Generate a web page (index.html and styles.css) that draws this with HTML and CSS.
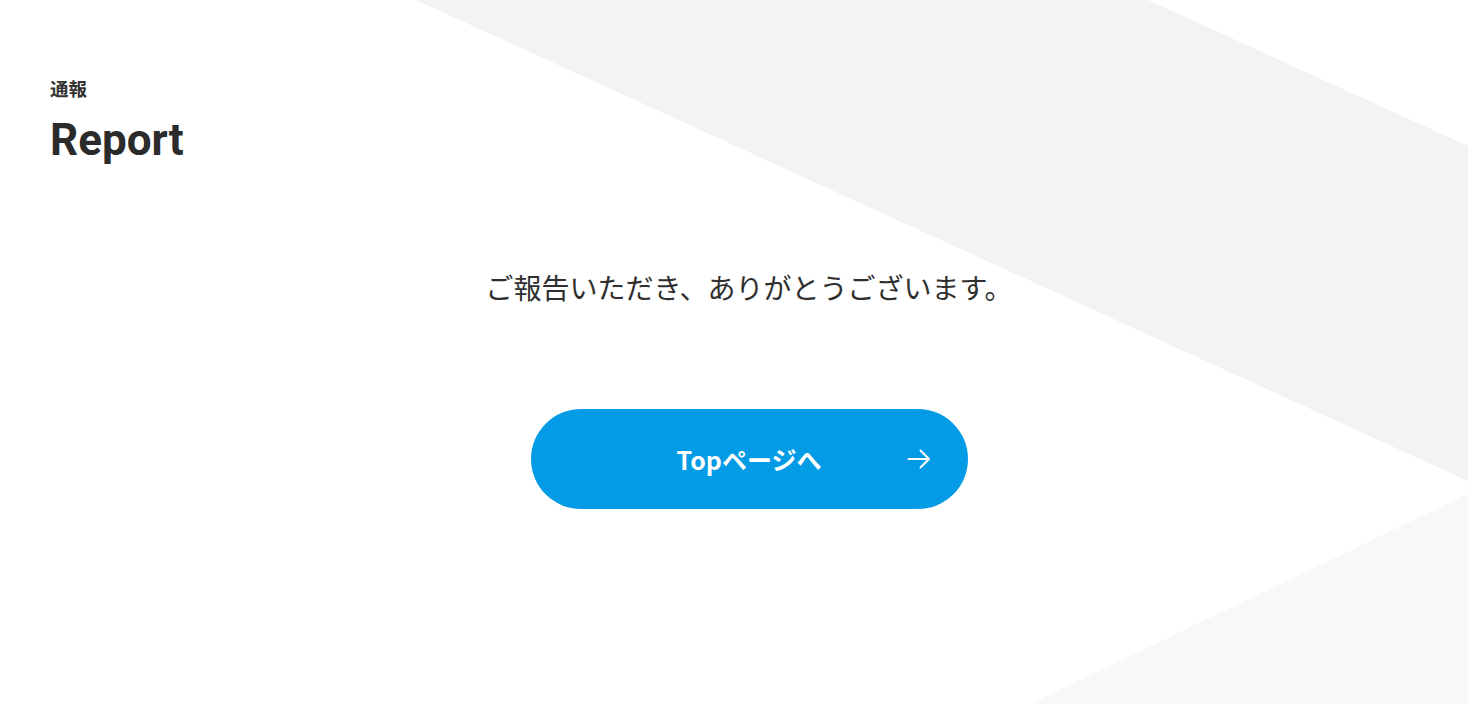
FILE: index.html
```html
<!DOCTYPE html>
<html lang="ja">
<head>
<meta charset="utf-8">
<title>Report</title>
<link rel="stylesheet" href="styles.css">
</head>
<body>
<svg class="bg" width="1468" height="704" viewBox="0 0 1468 704" aria-hidden="true">
  <polygon points="416,0 1148,0 1468,146 1468,481" fill="#f3f3f3"/>
  <polygon points="1030,704 1468,494 1468,704" fill="#f8f8f8"/>
</svg>
<div class="page">
  <header class="head">
    <p class="sub">通報</p>
    <h1 class="title">Report</h1>
  </header>
  <main class="content">
    <p class="msg">ご報告いただき、ありがとうございます。</p>
    <a class="btn" href="#">
      <span class="btn-label">Topページへ</span>
      <svg class="arrow" width="24" height="20" viewBox="0 0 24 20" aria-hidden="true">
        <path d="M1.5 10 H22 M13.5 1.5 L22 10 L13.5 18.5" fill="none" stroke="#fff" stroke-width="2" stroke-linecap="round" stroke-linejoin="round"/>
      </svg>
    </a>
  </main>
</div>
</body>
</html>
```
FILE: styles.css
```css
* { box-sizing: border-box; }
html, body { margin: 0; padding: 0; }
body {
  width: 1468px;
  height: 704px;
  overflow: hidden;
  background: #fff;
  color: #333;
  font-family: "Noto Sans CJK JP", "Noto Sans", sans-serif;
  position: relative;
}
.bg {
  position: absolute;
  left: 0;
  top: 0;
  z-index: 0;
}
.page {
  position: relative;
  z-index: 1;
  display: flex;
  flex-direction: column;
}
.head {
  padding: 76px 0 0 50px;
}
.sub {
  margin: 0;
  font-size: 18.5px;
  font-weight: 700;
  line-height: 24px;
  color: #333;
}
.title {
  margin: 15px 0 0;
  font-family: Roboto, "Noto Sans", sans-serif;
  font-size: 44px;
  font-weight: 700;
  line-height: 51px;
  color: #2b2b2b;
}
.content {
  display: flex;
  flex-direction: column;
  align-items: center;
  padding-left: 30px;
  padding-top: 101px;
}
.msg {
  margin: 0;
  font-size: 28px;
  line-height: 40px;
  font-weight: 400;
  color: #2f2f2f;
}
.btn {
  margin-top: 102px;
  width: 437px;
  height: 100px;
  border-radius: 50px;
  background: #039be5;
  color: #fff;
  text-decoration: none;
  display: flex;
  align-items: center;
  justify-content: center;
  position: relative;
}
.btn-label {
  font-size: 25px;
  font-weight: 700;
  line-height: 36px;
}
.arrow {
  position: absolute;
  right: 37px;
  top: 40px;
}
```
